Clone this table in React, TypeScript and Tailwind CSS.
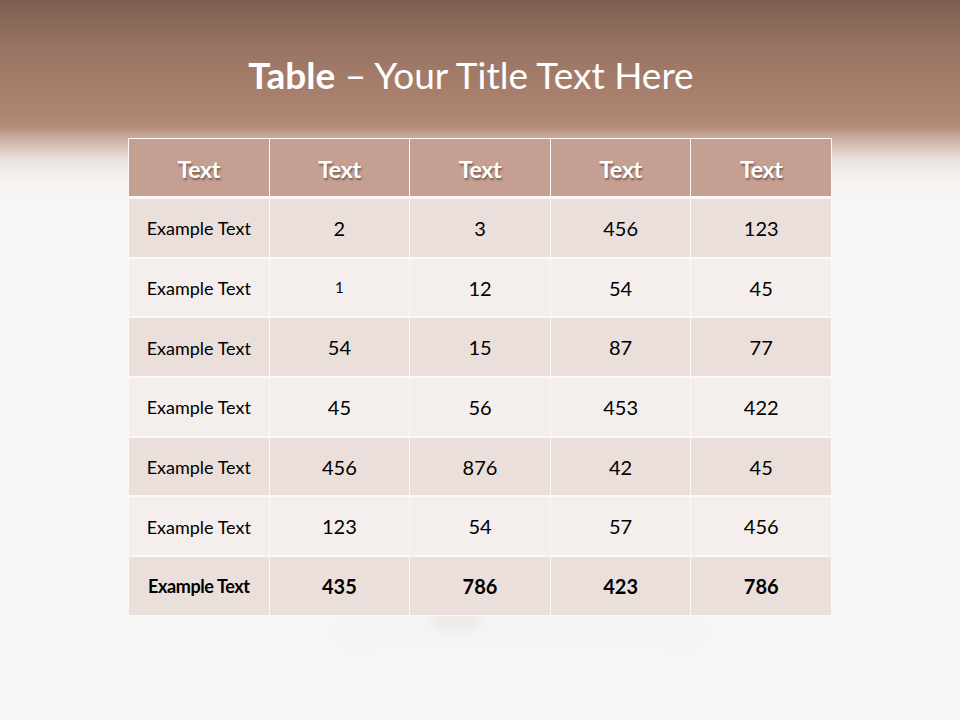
import React from "react";

const rows: { label: string; vals: string[]; small?: number[] }[] = [
  { label: "Example Text", vals: ["2", "3", "456", "123"] },
  { label: "Example Text", vals: ["1", "12", "54", "45"], small: [0] },
  { label: "Example Text", vals: ["54", "15", "87", "77"] },
  { label: "Example Text", vals: ["45", "56", "453", "422"] },
  { label: "Example Text", vals: ["456", "876", "42", "45"] },
  { label: "Example Text", vals: ["123", "54", "57", "456"] },
  { label: "Example Text", vals: ["435", "786", "423", "786"] },
];

export default function App() {
  return (
    <div
      className="relative w-[960px] h-[720px] overflow-hidden bg-[linear-gradient(to_bottom,#7d5f51_0px,#9a7563_50px,#ad8370_110px,#b38a77_126px,#cdb1a5_140px,#ebe3df_160px,#f5f2f0_180px,#f7f6f5_200px,#f8f7f6_720px)]"
      style={{ fontFamily: "Lato, 'Open Sans', sans-serif" }}
    >
      {/* faint blurred shapes below table */}
      <div className="absolute left-[432px] top-[606px] w-[50px] h-[24px] rounded-full bg-[#e9dcd8] blur-[5px] opacity-60" />
      <div className="absolute left-[330px] top-[616px] w-[380px] h-[30px] rounded-full bg-[#f0f0f3] blur-[14px] opacity-50" />

      <div className="relative flex flex-col items-center">
        <div className="h-[138px] w-full flex justify-center pt-[50px]">
          <h1 className="text-white text-[37px] leading-[50px] ml-[-18px]">
            <span className="font-bold">Table</span>
            <span> – Your Title Text Here</span>
          </h1>
        </div>

        <div className="w-[704px] bg-[#fbf8f7] p-px flex flex-col">
          <div className="grid grid-cols-5 gap-x-px h-[57px]">
            {["Text", "Text", "Text", "Text", "Text"].map((t, i) => (
              <div
                key={i}
                className="bg-[#c5a092] flex items-center justify-center pt-[4px] text-white font-bold text-[23px] tracking-[-0.3px] [text-shadow:1px_2px_2px_rgba(60,40,30,0.55)]"
              >
                {t}
              </div>
            ))}
          </div>
          <div className="flex flex-col gap-y-[2px] mt-[3px]">
            {rows.map((r, ri) => {
              const last = ri === rows.length - 1;
              const bg = ri % 2 === 0 ? "bg-[#eadfdb]" : "bg-[#f4efed]";
              return (
                <div key={ri} className="grid grid-cols-5 gap-x-px h-[57.7px]">
                  <div
                    className={`${bg} flex items-center justify-center pt-[2px] text-black ${last ? "font-bold text-[18px] tracking-[-0.4px]" : "text-[18px]"}`}
                  >
                    {r.label}
                  </div>
                  {r.vals.map((v, vi) => (
                    <div
                      key={vi}
                      className={`${bg} flex items-center justify-center text-black ${
                        r.small && r.small.includes(vi) ? "text-[15px]" : "text-[20px]"
                      } ${last ? "font-bold" : ""}`}
                    >
                      {v}
                    </div>
                  ))}
                </div>
              );
            })}
          </div>
        </div>
      </div>
    </div>
  );
}
